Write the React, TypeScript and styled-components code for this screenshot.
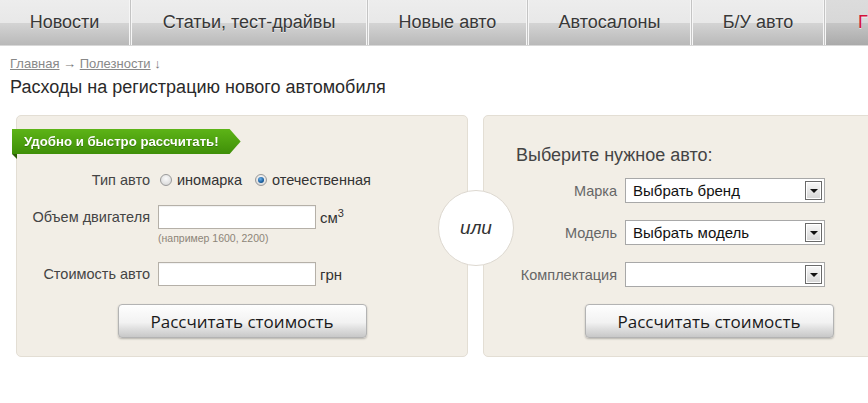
import React from "react";
import styled, { createGlobalStyle } from "styled-components";

const GlobalStyle = createGlobalStyle`
  html, body { margin: 0; padding: 0; overflow: hidden; background: #fff; }
  body {
    width: 868px; height: 403px;
    font-family: "Liberation Sans", Arial, sans-serif;
    color: #333;
  }
  * { box-sizing: border-box; }
`;

const Nav = styled.nav`
  display: flex;
  gap: 1px;
  height: 46px;
  background: #c4c4c4;
  border-bottom: 1px solid #d8d8d8;
  overflow: hidden;
`;

const Tab = styled.a<{ $w: number; $first?: boolean; $accent?: boolean }>`
  flex: 0 0 ${(p) => p.$w}px;
  display: flex;
  align-items: center;
  font-size: 18px;
  color: ${(p) => (p.$accent ? "#d4103a" : "#383838")};
  text-shadow: 0 1px 0 rgba(255, 255, 255, 0.6);
  white-space: nowrap;
  border-left: ${(p) => (p.$first ? "none" : "1px solid #f6f6f6")};
  border-right: 1px solid #f6f6f6;
  background: ${(p) =>
    p.$accent
      ? "linear-gradient(#dcdcdc 0%, #d8d8d8 50%, #c6c6c6 51%, #aaaaaa 100%)"
      : "linear-gradient(#ededed 0%, #e8e8e8 50%, #d4d4d4 51%, #b9b9b9 100%)"};
  justify-content: ${(p) => (p.$accent ? "flex-start" : "center")};
  padding-left: ${(p) => (p.$accent ? "32px" : "0")};
`;

const Main = styled.main`
  padding-left: 10px;
`;

const Crumbs = styled.div`
  margin-top: 10px;
  font-size: 13px;
  line-height: 16px;
  color: #777;
`;

const CrumbLink = styled.a`
  color: #888;
  text-decoration: underline;
`;

const Title = styled.h1`
  margin: 4px 0 0;
  font-size: 18px;
  font-weight: normal;
  line-height: 22px;
  color: #2a2a2a;
`;

const Panels = styled.div`
  position: relative;
  display: flex;
  gap: 15px;
  margin: 17px 0 0 6px;
`;

const Panel = styled.section`
  position: relative;
  flex: 0 0 452px;
  height: 242px;
  background: #f2eee6;
  border: 1px solid #e3ded4;
  border-radius: 5px;
`;

const LeftPanel = styled(Panel)`
  padding-top: 54px;
`;

const RightPanel = styled(Panel)`
  padding-top: 29px;
`;

const Ribbon = styled.div`
  position: absolute;
  left: -5px;
  top: 13px;
  height: 25px;
  padding: 0 22px 0 12px;
  display: flex;
  align-items: center;
  font-size: 13.2px;
  font-weight: bold;
  color: #fff;
  text-shadow: 0 1px 0 rgba(0, 0, 0, 0.25);
  background: linear-gradient(#5db417, #3f8f08);
  clip-path: polygon(0 0, calc(100% - 11px) 0, 100% 50%, calc(100% - 11px) 100%, 0 100%);
  filter: drop-shadow(0 1px 1px rgba(0, 0, 0, 0.3));
`;

const RibbonFold = styled.span`
  position: absolute;
  left: -5px;
  top: 38px;
  width: 0;
  height: 0;
  border-top: 5px solid #2c5d06;
  border-left: 5px solid transparent;
`;

const Row = styled.div<{ $mt?: number }>`
  display: flex;
  align-items: center;
  margin-top: ${(p) => p.$mt ?? 0}px;
  min-height: 20px;
`;

const Label = styled.span<{ $muted?: boolean }>`
  flex: 0 0 133px;
  text-align: right;
  margin-right: 8px;
  font-size: 14.5px;
  color: ${(p) => (p.$muted ? "#666" : "#444")};
  white-space: nowrap;
`;

const RadioGroup = styled.div`
  display: flex;
  align-items: center;
  font-size: 14.5px;
  color: #333;
`;

const Radio = styled.span<{ $checked?: boolean }>`
  position: relative;
  width: 12px;
  height: 12px;
  margin-left: 2px;
  border-radius: 50%;
  border: 1px solid #9a9a9a;
  background: radial-gradient(circle at 50% 35%, #fafafa 0%, #dedede 70%, #c8c8c8 100%);
  margin-right: 5px;
  &::after {
    content: "";
    display: ${(p) => (p.$checked ? "block" : "none")};
    position: absolute;
    left: 2px;
    top: 2px;
    width: 6px;
    height: 6px;
    border-radius: 50%;
    background: radial-gradient(circle at 40% 35%, #6ab0ea 0%, #1b5f9e 60%, #0d3a66 100%);
  }
`;

const Option = styled.span`
  margin-right: 11px;
`;

const TextInput = styled.span`
  display: block;
  width: 158px;
  height: 24px;
  background: #fff;
  border: 1px solid #b5b0a8;
  box-shadow: inset 0 1px 1px rgba(0, 0, 0, 0.06);
`;

const Unit = styled.span`
  margin-left: 4px;
  font-size: 15px;
  color: #333;
  sup {
    font-size: 11px;
    vertical-align: 6px;
    line-height: 0;
  }
`;

const Hint = styled.div`
  margin: 3px 0 0 141px;
  font-size: 10.5px;
  line-height: 12px;
  color: #8d8578;
`;

const Button = styled.button<{ $mt: number }>`
  display: block;
  width: 249px;
  height: 34px;
  margin: ${(p) => p.$mt}px auto 0;
  border: 1px solid #b3b3b3;
  border-radius: 4px;
  background: linear-gradient(#fefefe 0%, #f2f2f2 55%, #dedede 75%, #c8c8c8 100%);
  box-shadow: 0 1px 2px rgba(0, 0, 0, 0.25);
  font-family: "Open Sans", "Liberation Sans", sans-serif;
  font-size: 17px;
  color: #1a1a1a;
  padding: 0;
`;

const PanelTitle = styled.h2`
  margin: 0 0 13px 32px;
  font-size: 18px;
  font-weight: normal;
  line-height: 20px;
  color: #444;
`;

const SelectRow = styled.div<{ $mt?: number }>`
  display: flex;
  align-items: center;
  margin-top: ${(p) => p.$mt ?? 0}px;
`;

const Select = styled.div`
  display: flex;
  align-items: center;
  width: 200px;
  height: 25px;
  background: #fff;
  border: 1px solid #a8a8a8;
  padding: 0 2px 0 7px;
  font-size: 15px;
  color: #111;
`;

const SelectText = styled.span`
  flex: 1;
  white-space: nowrap;
`;

const Arrow = styled.span`
  display: flex;
  align-items: center;
  justify-content: center;
  width: 17px;
  height: 19px;
  border: 1px solid #6a6a6a;
  box-shadow: inset 0 0 0 1px #fff;
  background: linear-gradient(#f8f8f8, #d6d6d6);
  &::before {
    content: "";
    width: 0;
    height: 0;
    border-left: 4px solid transparent;
    border-right: 4px solid transparent;
    border-top: 4px solid #111;
  }
`;

const OrCircle = styled.div`
  position: absolute;
  left: 422px;
  top: 75px;
  width: 76px;
  height: 76px;
  border-radius: 50%;
  background: #fff;
  border: 1px solid #ddd8d0;
  display: flex;
  align-items: center;
  justify-content: center;
  font-size: 19px;
  font-style: italic;
  color: #333;
  z-index: 2;
`;

export default function App() {
  return (
    <>
      <GlobalStyle />
      <Nav>
        <Tab $w={130} $first>Новости</Tab>
        <Tab $w={236}>Статьи, тест-драйвы</Tab>
        <Tab $w={159}>Новые авто</Tab>
        <Tab $w={163}>Автосалоны</Tab>
        <Tab $w={132}>Б/У авто</Tab>
        <Tab $w={60} $accent>Г</Tab>
      </Nav>
      <Main>
        <Crumbs>
          <CrumbLink>Главная</CrumbLink> → <CrumbLink>Полезности</CrumbLink> ↓
        </Crumbs>
        <Title>Расходы на регистрацию нового автомобиля</Title>
        <Panels>
          <LeftPanel>
            <Ribbon>Удобно и быстро рассчитать!</Ribbon>
            <RibbonFold />
            <Row>
              <Label>Тип авто</Label>
              <RadioGroup>
                <Radio />
                <Option>иномарка</Option>
                <Radio $checked />
                <Option>отечественная</Option>
              </RadioGroup>
            </Row>
            <Row $mt={15}>
              <Label>Объем двигателя</Label>
              <TextInput />
              <Unit>
                см<sup>3</sup>
              </Unit>
            </Row>
            <Hint>(например 1600, 2200)</Hint>
            <Row $mt={18}>
              <Label>Стоимость авто</Label>
              <TextInput />
              <Unit>грн</Unit>
            </Row>
            <Button $mt={18}>Рассчитать стоимость</Button>
          </LeftPanel>
          <RightPanel>
            <PanelTitle>Выберите нужное авто:</PanelTitle>
            <SelectRow>
              <Label $muted>Марка</Label>
              <Select>
                <SelectText>Выбрать бренд</SelectText>
                <Arrow />
              </Select>
            </SelectRow>
            <SelectRow $mt={17}>
              <Label $muted>Модель</Label>
              <Select>
                <SelectText>Выбрать модель</SelectText>
                <Arrow />
              </Select>
            </SelectRow>
            <SelectRow $mt={17}>
              <Label $muted>Комплектация</Label>
              <Select>
                <SelectText />
                <Arrow />
              </Select>
            </SelectRow>
            <Button $mt={17}>Рассчитать стоимость</Button>
          </RightPanel>
          <OrCircle>или</OrCircle>
        </Panels>
      </Main>
    </>
  );
}
